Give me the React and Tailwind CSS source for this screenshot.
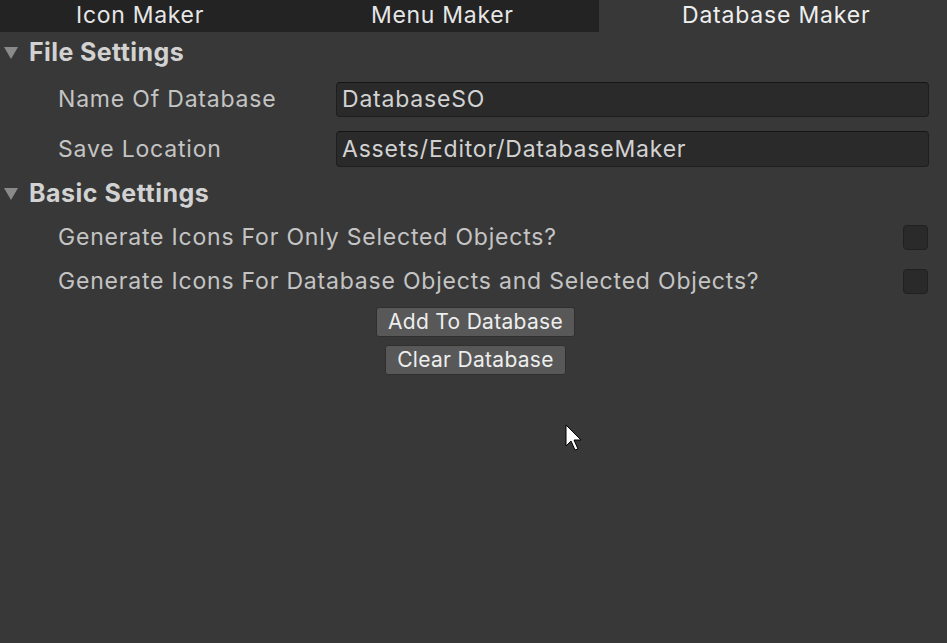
import React from "react";

const Tri = () => (
  <svg width="14" height="12" viewBox="0 0 14 12" className="shrink-0">
    <polygon points="0,0 14,0 7,12" fill="#8a8a8a" />
  </svg>
);

export default function App() {
  const font = { fontFamily: "Inter, 'Noto Sans', sans-serif" };
  return (
    <div
      className="relative w-[947px] h-[643px] bg-[#383838] overflow-hidden text-[#c4c4c4]"
      style={font}
    >
      {/* Tabs */}
      <div className="flex h-[32px]">
        <div className="w-[299px] bg-[#232323] flex items-center pl-[76px] text-[23px] tracking-[0.7px] text-[#e6e6e6] leading-none pb-[2px]">
          Icon Maker
        </div>
        <div className="w-[300px] bg-[#232323] flex items-center pl-[72px] text-[23px] tracking-[0.7px] text-[#e6e6e6] leading-none pb-[2px]">
          Menu Maker
        </div>
        <div className="flex-1 bg-[#383838] flex items-center pl-[83px] text-[23px] tracking-[0.8px] text-[#eeeeee] leading-none pb-[2px]">
          Database Maker
        </div>
      </div>

      {/* File Settings header */}
      <div className="h-[42px] flex items-center pl-[4px] gap-[11px]">
        <Tri />
        <span className="text-[25px] tracking-[0.4px] font-bold text-[#d2d2d2]">File Settings</span>
      </div>

      <div className="mt-[8px] h-[35px] flex items-center pl-[58px] pr-[18px]">
        <span className="w-[278px] text-[23px] tracking-[0.8px]">Name Of Database</span>
        <div className="flex-1 h-full bg-[#2a2a2a] border border-[#1e1e1e] border-t-[#151515] rounded-[4px] flex items-center pl-[5px] text-[23px] tracking-[0.8px] text-[#d2d2d2]">
          DatabaseSO
        </div>
      </div>

      <div className="mt-[14px] h-[36px] flex items-center pl-[58px] pr-[18px]">
        <span className="w-[278px] text-[23px] tracking-[0.8px]">Save Location</span>
        <div className="flex-1 h-full bg-[#2a2a2a] border border-[#1e1e1e] border-t-[#151515] rounded-[4px] flex items-center pl-[5px] text-[23px] tracking-[0.8px] text-[#d2d2d2]">
          Assets/Editor/DatabaseMaker
        </div>
      </div>

      {/* Basic Settings header */}
      <div className="mt-[6px] h-[42px] flex items-center pl-[4px] gap-[11px]">
        <Tri />
        <span className="text-[25px] tracking-[0.5px] font-bold text-[#d2d2d2]">Basic Settings</span>
      </div>

      <div className="h-[44px] flex items-center justify-between pl-[58px] pr-[19px]">
        <span className="text-[23px] tracking-[0.8px]">Generate Icons For Only Selected Objects?</span>
        <div className="w-[25px] h-[25px] bg-[#2a2a2a] border border-[#202020] rounded-[4px]" />
      </div>
      <div className="h-[44px] flex items-center justify-between pl-[58px] pr-[19px]">
        <span className="text-[23px] tracking-[0.8px]">Generate Icons For Database Objects and Selected Objects?</span>
        <div className="w-[25px] h-[25px] bg-[#2a2a2a] border border-[#202020] rounded-[4px]" />
      </div>

      <div className="flex flex-col items-center pl-[4px]">
        <div className="mt-[4px] h-[30px] px-[11px] bg-[#585858] border border-[#2f2f2f] rounded-[3px] flex items-center text-[21px] tracking-[0.3px] text-[#eeeeee]">
          Add To Database
        </div>
        <div className="mt-[8px] h-[30px] px-[11px] bg-[#585858] border border-[#2f2f2f] rounded-[3px] flex items-center text-[21px] tracking-[0.3px] text-[#eeeeee]">
          Clear Database
        </div>
      </div>

      {/* mouse cursor */}
      <svg
        className="absolute left-[565px] top-[424px]"
        width="20"
        height="28"
        viewBox="0 0 20 28"
      >
        <path
          d="M1 1 L1 22 L6 17 L10 26 L13 25 L9 16 L16 16 Z"
          fill="#ffffff"
          stroke="#000000"
          strokeWidth="1"
          strokeLinejoin="miter"
        />
      </svg>
    </div>
  );
}
